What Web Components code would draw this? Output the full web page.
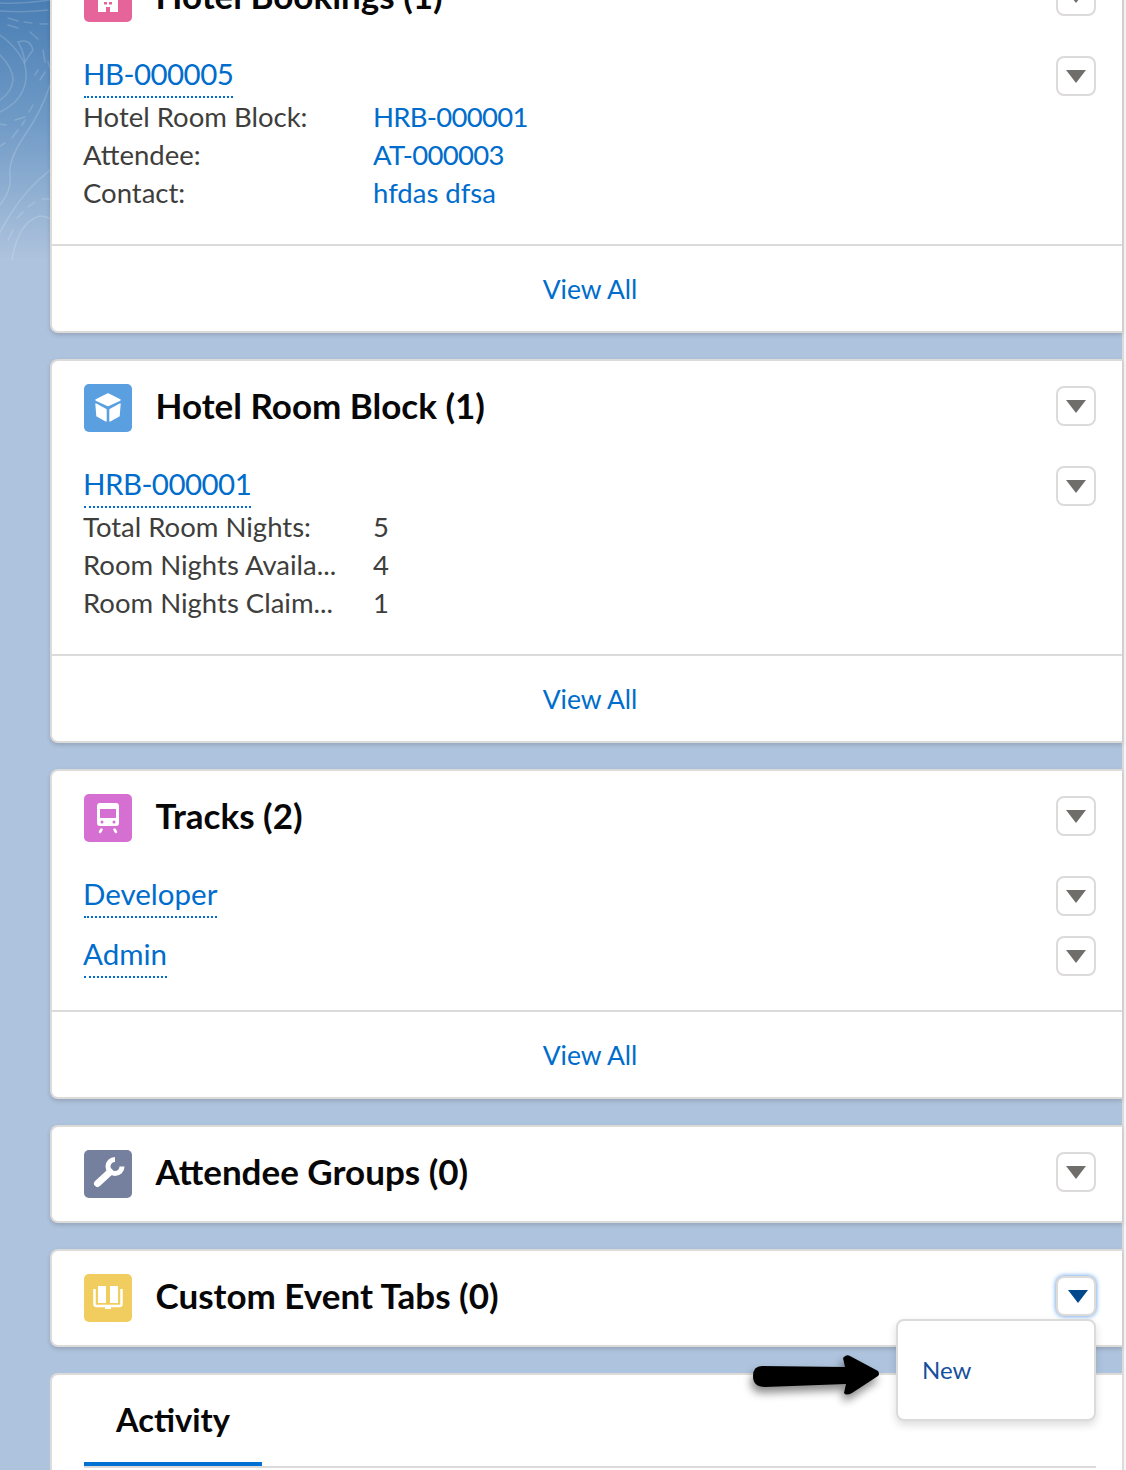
<!DOCTYPE html>
<html lang="en">
<head>
<meta charset="utf-8">
<title>Related lists</title>
<style>
  html, body { margin: 0; padding: 0; height: 1470px; overflow: hidden; }
  body { font-family: Lato, "Open Sans", sans-serif; color: #3e3e3c; }
</style>
</head>
<body>
<x-page>
  <x-card title="Hotel Bookings (1)" icon="hotel" footer>
    <x-record label="HB-000005">
      <x-field label="Hotel Room Block:" link tight>HRB-000001</x-field>
      <x-field label="Attendee:" link tight>AT-000003</x-field>
      <x-field label="Contact:" link>hfdas dfsa</x-field>
    </x-record>
  </x-card>
  <x-card title="Hotel Room Block (1)" icon="cube" footer>
    <x-record label="HRB-000001">
      <x-field label="Total Room Nights:">5</x-field>
      <x-field label="Room Nights Availa...">4</x-field>
      <x-field label="Room Nights Claim...">1</x-field>
    </x-record>
  </x-card>
  <x-card title="Tracks (2)" icon="tram" footer>
    <x-record label="Developer"></x-record>
    <x-record label="Admin"></x-record>
  </x-card>
  <x-card title="Attendee Groups (0)" icon="wrench"></x-card>
  <x-card title="Custom Event Tabs (0)" icon="book" open></x-card>
  <x-activity></x-activity>
  <x-arrow slot="overlay"></x-arrow>
</x-page>

<script>
// Iconos de cada tarjeta: color de fondo y trazos blancos en una caja de 48x48
const ICONS = {
  hotel: ['#e5659a', `
    <path fill="#fff" fill-rule="evenodd" d="M14 14h20v24h-8v-5h-4v5h-8zM20 28v2.5h3V28zM25 28v2.5h3V28z"/>`],
  cube: ['#5a9fdf', `
    <g fill="#fff" stroke="#fff" stroke-width="1.4" stroke-linejoin="round">
      <path d="M24 10l12 6-12 5.5L12 16z"/>
      <path d="M12 20l10 5.5V37l-9-5z"/>
      <path d="M36 20l-10 5.5V37l9-5z"/>
    </g>`],
  tram: ['#d56fd2', `
    <path fill="#fff" fill-rule="evenodd" d="M16 9h16a3 3 0 0 1 3 3v17a3 3 0 0 1-3 3H16a3 3 0 0 1-3-3V12a3 3 0 0 1 3-3zM16 15v9h16v-9z"/>
    <circle cx="18" cy="28" r="1.5" fill="#d56fd2"/>
    <circle cx="30" cy="28" r="1.5" fill="#d56fd2"/>
    <path d="M17.500 35.500l-1.500 2.500M30.500 35.500l1.500 2.500" stroke="#fff" stroke-width="2.600" stroke-linecap="round"/>`],
  wrench: ['#75809e', `
    <g fill="none" stroke="#fff" stroke-linecap="round">
      <path d="M31 9.500A7 7 0 1 0 38 16.500" stroke-width="5" stroke-linecap="butt"/>
      <path d="M26 22L13.500 33.500" stroke-width="7"/>
    </g>`],
  book: ['#f0cd5e', `
    <path fill="#fff" d="M14 12h8v17h-8zM26 12h8v17h-8z"/>
    <path fill="none" stroke="#fff" stroke-width="2.500" d="M10.500 15v15a2 2 0 0 0 2 2h23a2 2 0 0 0 2-2V15"/>
    <path fill="#fff" d="M21 32h6v3h-6z"/>`]
};

// Botón con triángulo; con el atributo "open" muestra el menú "New"
class XMenuButton extends HTMLElement {
  constructor() { super(); this.attachShadow({ mode: 'open' }); }
  connectedCallback() {
    const open = this.hasAttribute('open');
    this.shadowRoot.innerHTML = `
      <style>
        :host { display: block; position: relative; flex: none; width: 40px; height: 40px; }
        .btn { box-sizing: border-box; width: 40px; height: 40px; border: 2px solid #dddbda; border-radius: 8px;
               background: #fff; display: flex; align-items: center; justify-content: center; }
        .btn i { display: block; width: 0; height: 0; border-left: 10px solid transparent;
                 border-right: 10px solid transparent; border-top: 13px solid #706e6b; margin-top: 1px; }
        .btn.open { box-shadow: 0 0 5px #4a90e2; }
        .btn.open i { border-top-color: #00478b; margin-left: 3px; }
        .menu { position: absolute; z-index: 10; top: 43px; right: 0; box-sizing: border-box; width: 200px; height: 102px;
                background: #fff; border: 2px solid #dddbda; border-radius: 8px; box-shadow: 0 4px 8px rgba(0,0,0,.14);
                display: flex; align-items: center; padding: 0 0 2px 24px; font-size: 24px; color: #16509c; }
      </style>
      <div class="btn ${open ? 'open' : ''}"><i></i></div>
      ${open ? '<div class="menu">New</div>' : ''}`;
  }
}

// Una fila etiqueta / valor dentro de un registro
class XField extends HTMLElement {
  constructor() { super(); this.attachShadow({ mode: 'open' }); }
  connectedCallback() {
    const color = this.hasAttribute('link') ? '#006dcc' : '#3e3e3c';
    const spacing = this.hasAttribute('tight') ? '-.72px' : '0';
    this.shadowRoot.innerHTML = `
      <style>
        :host { display: grid; grid-template-columns: 290px 1fr; height: 38px; line-height: 38px; font-size: 27.5px; color: #3e3e3c; white-space: nowrap; }
        .value { color: ${color}; letter-spacing: ${spacing}; }
      </style>
      <span>${this.getAttribute('label')}</span>
      <span class="value"><slot></slot></span>`;
  }
}

// Registro: enlace punteado, botón a la derecha y campos debajo
class XRecord extends HTMLElement {
  constructor() { super(); this.attachShadow({ mode: 'open' }); }
  connectedCallback() {
    const label = this.getAttribute('label');
    // los dígitos de la fuente salen más anchos que en la captura
    const spacing = /\d/.test(label) ? '-.55px' : '0';
    this.shadowRoot.innerHTML = `
      <style>
        :host { display: block; }
        .top { display: flex; justify-content: space-between; align-items: flex-start; padding-top: 12px; height: 41px; }
        a { display: block; font-size: 29.5px; line-height: 34px; padding-bottom: 5px; color: #006dcc;
            letter-spacing: ${spacing}; border-bottom: 2px dotted #006dcc; margin-left: 1px; text-indent: -1px; }
        x-menu-button { margin-top: -1px; }
        .fields { margin-left: 0; }
      </style>
      <div class="top">
        <a>${label}</a>
        <x-menu-button></x-menu-button>
      </div>
      <div class="fields"><slot></slot></div>`;
  }
}

// Tarjeta de lista relacionada
class XCard extends HTMLElement {
  constructor() { super(); this.attachShadow({ mode: 'open' }); }
  connectedCallback() {
    const [bg, art] = ICONS[this.getAttribute('icon')];
    const hasFooter = this.hasAttribute('footer');
    this.shadowRoot.innerHTML = `
      <style>
        :host { display: block; background: #fff; border: 2px solid #dddbda; border-right: 0;
                border-radius: 8px 0 0 8px; box-shadow: 0 2px 4px rgba(0,0,0,.16); }
        header { display: flex; align-items: flex-start; padding: 23px 26px 23px 32px; }
        svg { display: block; flex: none; width: 48px; height: 48px; border-radius: 5px; background: ${bg}; margin-right: 23.500px; }
        h2 { flex: 1; margin: -3px 0 0; font-size: 35px; line-height: 48px; font-weight: 700; color: #080707; }
        header x-menu-button { margin-top: 2px; }
        .body { padding: 0 26px 32px 31px; display: flex; flex-direction: column; gap: 7px; }
        footer { box-sizing: border-box; height: 87px; border-top: 2px solid #dddbda; padding-left: 6px;
                 display: flex; align-items: center; justify-content: center; font-size: 26.5px; color: #006dcc; }
      </style>
      <header>
        <svg viewBox="0 0 48 48">${art}</svg>
        <h2>${this.getAttribute('title')}</h2>
        <x-menu-button ${this.hasAttribute('open') ? 'open' : ''}></x-menu-button>
      </header>
      ${hasFooter ? '<div class="body"><slot></slot></div><footer>View All</footer>' : ''}`;
  }
}

// Tarjeta de actividad con su pestaña
class XActivity extends HTMLElement {
  constructor() { super(); this.attachShadow({ mode: 'open' }); }
  connectedCallback() {
    this.shadowRoot.innerHTML = `
      <style>
        :host { display: block; background: #fff; border: 2px solid #dddbda; border-right: 0;
                border-radius: 8px 0 0 0; height: 200px; padding: 0 26px 0 32px; }
        .tabs { border-bottom: 2px solid #dddbda; height: 91px; display: flex; }
        .tab { box-sizing: border-box; width: 178px; height: 91px; padding: 27px 0 0 32px; border-bottom: 4px solid #0070d2;
               font-size: 32.700px; line-height: 36px; font-weight: 700; color: #080707; }
      </style>
      <div class="tabs"><div class="tab">Activity</div></div>`;
  }
}

// Flecha negra dibujada encima de la captura
class XArrow extends HTMLElement {
  constructor() { super(); this.attachShadow({ mode: 'open' }); }
  connectedCallback() {
    this.shadowRoot.innerHTML = `
      <style>
        :host { position: absolute; z-index: 20; left: 750px; top: 1350px; width: 135px; height: 50px; }
        svg { display: block; overflow: visible; filter: drop-shadow(-2px 6px 4px rgba(0,0,0,.45)); }
      </style>
      <svg width="135" height="50" viewBox="0 0 135 50">
        <path fill="#000" d="M12 16 L95 17 L93 8 Q96 4 100 6 L128 21 Q130 24 128 26 L102 43 Q96 46 94 43 L96 34 L15 37 Q3 37 3 26 Q3 16 12 16Z"/>
      </svg>`;
  }
}

// Fondo con curvas de nivel, visible sólo en la franja izquierda
class XBackdrop extends HTMLElement {
  constructor() { super(); this.attachShadow({ mode: 'open' }); }
  connectedCallback() {
    this.shadowRoot.innerHTML = `
      <style>
        :host { position: absolute; left: 0; top: 0; width: 50px; height: 270px; overflow: hidden; }
        svg { display: block; }
      </style>
      <svg width="51" height="270" viewBox="0 0 51 270" fill="none" stroke="#fff" stroke-opacity=".17" stroke-width="1.500" stroke-linecap="round">
        <path d="M0 3Q25 4 50 0M0 11Q25 13 48 10"/>
        <path d="M0 35Q15 45 24 62Q31 85 15 102Q8 108 0 112"/>
        <path d="M0 55Q13 68 13 80Q12 92 0 100"/>
        <path d="M18 42Q30 38 33 50Q29 55 25 62Q23 50 18 42Z"/>
        <path d="M50 85Q42 110 25 135T10 175T0 205"/>
        <path d="M50 170Q25 190 10 215T0 235"/>
        <path d="M12 260Q18 222 40 216Q46 216 50 219"/>
        <path d="M8 18L18 21M8 25L18 28M24 22L32 23M40 24L48 24M30 32L38 39M43 50L45 62M48 62L50 68M40 80L45 72M35 75L38 70M29 112L33 105M15 120L25 117M22 125L25 120M12 138L18 130M0 124L6 125M0 146L5 143M28 207L35 202M17 218L23 212M8 240L13 230M42 199L50 199"/>
      </svg>`;
  }
}

// Contenedor de la página: pila de tarjetas y carril derecho
class XPage extends HTMLElement {
  constructor() { super(); this.attachShadow({ mode: 'open' }); }
  connectedCallback() {
    this.shadowRoot.innerHTML = `
      <style>
        :host { display: flex; position: relative; box-sizing: border-box; width: 1126px; height: 1470px; overflow: hidden;
                padding-left: 50px; background: linear-gradient(#4a7eb4 0, #6f9ac6 120px, #aec3dd 260px) no-repeat; background-color: #aec3dd; }
        .stack { position: relative; width: 1072px; margin-top: -51px; display: flex; flex-direction: column; gap: 26px; flex: none; }
        .rail { box-sizing: border-box; width: 4px; flex: none; border-left: 2px solid #dddbda; background: #f3f5fa; }
        ::slotted(*) { flex: none; }
      </style>
      <x-backdrop></x-backdrop>
      <div class="stack"><slot></slot></div>
      <div class="rail"></div>
      <slot name="overlay"></slot>`;
  }
}

customElements.define('x-menu-button', XMenuButton);
customElements.define('x-field', XField);
customElements.define('x-record', XRecord);
customElements.define('x-card', XCard);
customElements.define('x-activity', XActivity);
customElements.define('x-arrow', XArrow);
customElements.define('x-backdrop', XBackdrop);
customElements.define('x-page', XPage);
</script>
</body>
</html>
